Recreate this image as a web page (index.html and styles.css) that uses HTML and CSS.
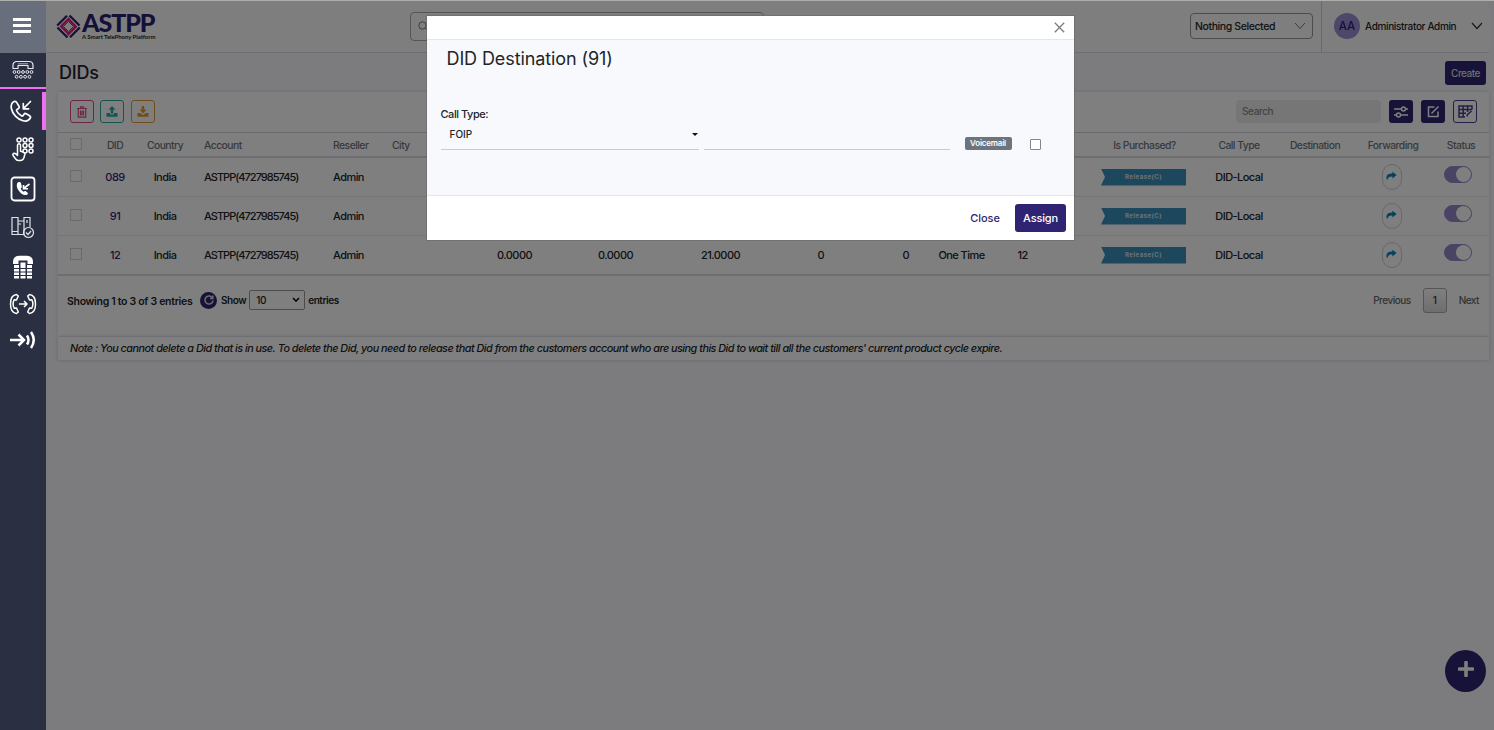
FILE: index.html
```html
<!DOCTYPE html>
<html lang="en">
<head>
<meta charset="utf-8">
<title>ASTPP - DIDs</title>
<link rel="stylesheet" href="styles.css">
</head>
<body>
<svg width="0" height="0" class="defs">
  <symbol id="share" viewBox="0 0 12 10"><path d="M7 .4 11.6 4 7 7.6V5.5C4 5.3 2.2 6 1.6 9.4.6 8.700 .3 7.800.5 6.200.9 3.500 3.500 2.300 7 2.400Z" fill="currentColor"/></symbol>
</svg>
<div class="app">
  <nav class="sidebar">
    <div class="menu"><svg width="20" height="18" viewBox="0 0 20 18"><path d="M1 2.500h18M1 8.500h18M1 14.500h18" stroke="#fff" stroke-width="3"/></svg></div>
    <div class="nav-head"><svg width="22" height="20" viewBox="0 0 22 20" fill="none" stroke="#e5e7ee" stroke-width="1.200"><path d="M1 8.500V5.500Q1 1.500 5 1.500h12Q21 1.500 21 5.500v3h-5V5.500H6v3Z" stroke-linejoin="round"/><path d="M6 3.800h10" stroke-width=".7"/><g stroke-width="1"><circle cx="2.500" cy="12" r="1.400"/><circle cx="6.700" cy="12" r="1.400"/><circle cx="11" cy="12" r="1.400"/><circle cx="15.300" cy="12" r="1.400"/><circle cx="19.500" cy="12" r="1.400"/><circle cx="4.600" cy="16.800" r="1.400"/><circle cx="8.900" cy="16.800" r="1.400"/><circle cx="13.100" cy="16.800" r="1.400"/><circle cx="17.400" cy="16.800" r="1.400"/></g></svg></div>
    <div class="nav-item active"><svg width="22" height="22" viewBox="0 0 22 22" fill="none" stroke="#fff" stroke-width="1.700" stroke-linejoin="round" stroke-linecap="round"><path d="M3.500 1.800C1.200 3.200.8 5.500 1.400 8.500c1 5.500 6 10.700 11.600 12.200 3 .8 5.800 0 7.300-2.700.5-.9.100-1.600-.7-2.200l-3.400-2c-.9-.5-1.700-.3-2.200.5l-.9 1.200c-.4.600-1 .7-1.700.3-2.100-1.100-3.700-2.700-4.700-4.800-.3-.6-.1-1.200.5-1.600L8.500 8.500c.8-.6 1-1.300.5-2.200L6.600 2.400C5.800 1.200 4.800 1 3.500 1.800Z"/><path d="M20.500 1.500 13.500 8.500M13.300 3.500v5.300h5.300"/></svg></div>
    <div class="nav-item"><svg width="22" height="25" viewBox="0 0 22 25" fill="none" stroke="#fff" stroke-width="1.500"><circle cx="7" cy="3" r="2"/><circle cx="13" cy="3" r="2"/><circle cx="19" cy="3" r="2"/><circle cx="13" cy="8.500" r="2"/><circle cx="19" cy="8.500" r="2"/><circle cx="13" cy="14" r="2"/><circle cx="19" cy="14" r="2"/><path d="M5.500 15.500V8.800q0-2 1.500-2t1.500 2v5.500l3 .8q1.700.6 1.300 2.400l-1 3.500q-.8 2.500-3.500 2.500H6.500q-2 0-3.200-2l-2.200-3q-.8-1.800 1-2.200 1.400-.1 3.400 2.200Z" stroke-linejoin="round"/></svg></div>
    <div class="nav-item"><svg width="26" height="26" viewBox="0 0 26 26" fill="none" stroke="#fff" stroke-width="1.800"><rect x="1.500" y="1.500" width="23" height="23" rx="3"/><path d="M8.200 6.200C6.200 7.500 6.500 11 8.300 14c2 3.400 5 5.500 8 5 1.400-.3 2-1.500 1.400-2.300l-2.200-1.600c-.8-.4-1.200.1-1.800.7-1.700-.8-2.600-2-3-3.700.9-.4 1.300-.8 1.100-1.700l-.8-3.200c-.4-1.200-1.600-1.700-2.800-1Z" fill="#fff" stroke="none"/><path d="m19.500 8-6 4.500M13.500 9v3.700h4.500" stroke-width="1.600"/></svg></div>
    <div class="nav-item"><svg width="24" height="23" viewBox="0 0 24 23" fill="none" stroke="#dfe2ea" stroke-width="1.200"><path d="M1 1.500h6v17H1zM7 5h6v13.500H7M13 12V1.500h6V11M13 5V3M1 15.500h6M7 8h3M16 4v3"/><circle cx="17.500" cy="16.500" r="5"/><path d="m15 16.500 2 2 3-3.500"/></svg></div>
    <div class="nav-item"><svg width="22" height="24" viewBox="0 0 22 24" fill="#fff"><path d="M1 7Q1 1 7 .8h8Q21 1 21 7V9h-5.500V5.600h-9V9H1Z"/><path d="M2 10h5v3H2zM8.500 7.500h5V13h-5zM15 10h5v3h-5zM2 14h5v2.600H2zM8.500 14h5v2.600h-5zM15 14h5v2.600h-5zM2 17.600h5v2.400H2zM8.500 17.600h5v2.400h-5zM15 17.600h5v2.400h-5zM2 21h5v2.500H2zM8.500 21h5v2.500h-5zM15 21h5v2.500h-5z"/></svg></div>
    <div class="nav-item late"><svg width="28" height="22" viewBox="0 0 28 22" fill="none" stroke="#fff" stroke-width="1.500" stroke-linejoin="round"><path d="M7.500 1.500C3.500 2 1.500 6 1.500 11s2 9 6 9.500l1.800-1.500-1.800-4-2.200.3C4 13 4 9 5.300 6.700L7.500 7l1.800-4Z"/><path d="M20.500 1.500c4 .5 6 4.500 6 9.500s-2 9-6 9.500L18.700 19l1.800-4 2.200.3c1.300-2.300 1.300-6.300 0-8.600L20.500 7l-1.800-4Z"/><path d="M10 11h7.500M15 8l3 3-3 3"/></svg></div>
    <div class="nav-item"><svg width="26" height="18" viewBox="0 0 26 18" fill="none" stroke="#fff" stroke-width="2.500"><path d="M0 9h13M8.500 3.500 14 9l-5.500 5.500"/><path d="M17 4.500q3 4.500 0 9M21 1q5.500 8 0 16"/></svg></div>
  </nav>

  <main class="main">
    <header class="topbar">
      <div class="brand">
        <svg width="25" height="25" viewBox="0 0 25 25" fill="none" stroke-width="2.300"><path d="M1.200 11.500 11 1.700M13.500 1.500l10 10M23.800 13.500 14 23.300M11.500 23.500l-10-10" stroke="#2b2171"/><path d="M4.500 13 13.500 4M12 4.700l8.500 8.500M20.500 12l-9 9M13 20.300 4.500 11.800" stroke="#e3187b"/><path d="m7.500 12.500 5-5 5 5-5 5Z" stroke="#e3187b" stroke-width="1"/></svg>
        <div class="brand-text"><span class="brand-name">ASTPP</span><span class="brand-sub">A Smart TelePhony Platform</span></div>
      </div>
      <div class="global-search"><svg width="11" height="11" viewBox="0 0 11 11" fill="none" stroke="#777"><circle cx="4.500" cy="4.500" r="3.700"/><path d="m7.500 7.500 3 3"/></svg></div>
      <div class="company"><span>Nothing Selected</span><svg width="12" height="8" viewBox="0 0 12 8" fill="none" stroke="#777"><path d="m1 1 5 5.500L11 1"/></svg></div>
      <div class="user"><span class="avatar">AA</span><span class="user-name">Administrator Admin</span><svg width="12" height="8" viewBox="0 0 12 8" fill="none" stroke="#333" stroke-width="1.200"><path d="m1 1 5 5.500L11 1"/></svg></div>
    </header>

    <div class="page-head"><h1>DIDs</h1><button class="create">Create</button></div>

    <section class="card">
      <div class="toolbar">
        <button class="tool pink"><svg width="10" height="12" viewBox="0 0 10 12" fill="none" stroke="currentColor" stroke-width="1.200"><path d="M0 2.500h10M3.500 2.300V.8h3v1.500M1.300 3v8.200h7.400V3M3.500 4.500v5M5 4.500v5M6.500 4.500v5"/></svg></button>
        <button class="tool teal"><svg width="12" height="11" viewBox="0 0 12 11" fill="currentColor"><path d="M6 0 9.500 3.800H7.200V7.500H4.800V3.800H2.500ZM.5 7H4v1.500h4V7h3.500v3.800H.5Z"/></svg></button>
        <button class="tool orange"><svg width="12" height="11" viewBox="0 0 12 11" fill="currentColor"><path d="M4.800 0h2.400v3.500h2.300L6 7.500 2.500 3.500h2.300ZM.5 7h2.700L6 9l2.800-2h2.700v3.800H.5Z"/></svg></button>
        <div class="search">Search</div>
        <button class="tool solid"><svg width="16" height="14" viewBox="0 0 16 14" fill="none" stroke="#fff" stroke-width="1.500"><path d="M1 4h7.500M12.500 4H15M1 10h2.500M7.500 10H15"/><circle cx="10.500" cy="4" r="2"/><circle cx="5.500" cy="10" r="2"/></svg></button>
        <button class="tool solid"><svg width="13" height="13" viewBox="0 0 13 13" fill="none" stroke="#fff" stroke-width="1.500"><path d="M7.500 2H1.500v9.500H11V6.500M4.500 8.500 11.500 1.500"/></svg></button>
        <button class="tool outline"><svg width="15" height="13" viewBox="0 0 15 13" fill="none" stroke="currentColor" stroke-width="1.500"><path d="M14 4.500V1H1v11h6M1 4.500h13M1 8.200h7M5.200 1v11M9.600 1v6M9 11.500l.4-1.800L13.500 6"/></svg></button>
      </div>
      <div class="row thead">
        <span class="c"><i class="box"></i></span><span class="c">DID</span><span class="c">Country</span><span class="acct">Account</span><span>Reseller</span><span>City</span><span></span><span></span><span></span><span></span><span></span><span></span><span></span><span></span><span class="c">Is Purchased?</span><span class="c">Call Type</span><span class="c">Destination</span><span class="c">Forwarding</span><span class="c">Status</span>
      </div>
      <div class="row">
        <span class="c"><i class="box"></i></span><span class="c link">089</span><span class="c">India</span><span class="acct tight">ASTPP(4727985745)</span><span>Admin</span><span></span><span></span><span></span><span></span><span></span><span></span><span></span><span></span><span></span><span><b class="release">Release(C)</b></span><span class="c">DID-Local</span><span></span><span class="c"><i class="fwd"><svg width="11" height="10"><use href="#share"/></svg></i></span><span class="c"><i class="toggle"></i></span>
      </div>
      <div class="row">
        <span class="c"><i class="box"></i></span><span class="c link">91</span><span class="c">India</span><span class="acct tight">ASTPP(4727985745)</span><span>Admin</span><span></span><span></span><span></span><span></span><span></span><span></span><span></span><span></span><span></span><span><b class="release">Release(C)</b></span><span class="c">DID-Local</span><span></span><span class="c"><i class="fwd"><svg width="11" height="10"><use href="#share"/></svg></i></span><span class="c"><i class="toggle"></i></span>
      </div>
      <div class="row last">
        <span class="c"><i class="box"></i></span><span class="c link">12</span><span class="c">India</span><span class="acct tight">ASTPP(4727985745)</span><span>Admin</span><span></span><span class="r">0.0000</span><span class="r">0.0000</span><span class="r">21.0000</span><span class="r">0</span><span class="r">0</span><span class="c">One Time</span><span class="c">12</span><span></span><span><b class="release">Release(C)</b></span><span class="c">DID-Local</span><span></span><span class="c"><i class="fwd"><svg width="11" height="10"><use href="#share"/></svg></i></span><span class="c"><i class="toggle"></i></span>
      </div>
      <div class="tfoot">
        <strong class="showing">Showing 1 to 3 of 3 entries</strong>
        <i class="refresh"><svg width="10" height="10" viewBox="0 0 10 10" fill="none" stroke="#ddd" stroke-width="1.500"><path d="M9 5.500A4 4 0 1 1 7.800 2.200M8.800.5v3H6"/></svg></i>
        <strong class="show">Show</strong>
        <span class="count">10<svg width="8" height="6" viewBox="0 0 8 6" fill="none" stroke="#111" stroke-width="1.600"><path d="m1 1 3 3 3-3"/></svg></span>
        <strong class="show">entries</strong>
        <div class="pager"><span>Previous</span><b>1</b><span>Next</span></div>
      </div>
    </section>
    <p class="note">Note : You cannot delete a Did that is in use. To delete the Did, you need to release that Did from the customers account who are using this Did to wait till all the customers' current product cycle expire.</p>
    <div class="fab"><svg width="16" height="16" viewBox="0 0 16 16"><path d="M8 1.500v13M1.500 8h13" stroke="#fff" stroke-width="3.600" stroke-linecap="round"/></svg></div>
  </main>

  <div class="overlay"></div>
  <div class="modal">
    <div class="modal-head"><svg width="11" height="11" viewBox="0 0 11 11" stroke="#7c7c7c" stroke-width="1.300"><path d="m.8.8 9.400 9.400M10.200.8.8 10.200"/></svg></div>
    <div class="modal-body">
      <h2>DID Destination (91)</h2>
      <label class="field-label">Call Type:</label>
      <div class="fields">
        <div class="select">FOIP<i class="caret"></i></div>
        <div class="input"></div>
        <span class="badge">Voicemail</span>
        <i class="check"></i>
      </div>
    </div>
    <div class="modal-foot"><button class="close">Close</button><button class="assign">Assign</button></div>
  </div>
  <div class="edge"></div>
</div>
</body>
</html>
```
FILE: styles.css
```css
* { box-sizing: border-box; }
body { margin: 0; font-family: Inter, "Liberation Sans", sans-serif; font-weight: 500; color: #212529; font-size: 11.5px; }
button { font: inherit; border: 0; padding: 0; margin: 0; letter-spacing: inherit; }
svg { display: block; flex: none; }
i { font-style: normal; display: block; }
.defs { position: absolute; }
.app { display: flex; position: relative; width: 1494px; height: 730px; overflow: hidden; background: #f8f9fd; }
.edge { position: absolute; top: 0; left: 0; right: 0; height: 1px; background: #aeaeaa; z-index: 5; }

.sidebar { width: 46px; background: #2a3042; position: relative; z-index: 3; flex: none; display: flex; flex-direction: column; }
.menu { height: 53px; background: #696e7c; display: flex; align-items: center; justify-content: center; padding: 0 2px 2px 0; }
.nav-head { height: 36px; border-bottom: 2px solid #f16df2; display: flex; align-items: center; justify-content: center; padding-right: 1px; }
.nav-item { height: 39px; display: flex; align-items: center; justify-content: center; padding-right: 1px; }
.nav-item.active { margin-top: 3px; height: 38px; border-right: 4px solid #f16df2; padding: 0; }
.nav-item.late { height: 36px; }
.nav-item:last-child { height: 35px; }

.main { flex: 1; display: flex; flex-direction: column; padding-right: 5px; position: relative; }
.topbar { height: 53px; background: #fdfdfd; border-bottom: 1px solid #dcdde0; display: flex; align-items: center; padding-left: 10px; flex: none; }
.brand { display: flex; align-items: center; gap: 1px; width: 354px; }
.brand-text { display: flex; flex-direction: column; }
.brand-name { font: 900 25px/22px Lato, sans-serif; letter-spacing: -1.1px; color: #2b2171; }
.brand-sub { font: 700 6px/8px Lato, sans-serif; white-space: nowrap; letter-spacing: -.05px; }
.global-search { width: 354px; height: 29px; border: 1px solid #aaa; border-radius: 4px; display: flex; align-items: center; padding-left: 7px; }
.company { margin-left: auto; width: 123px; height: 26px; border: 1px solid #999; border-radius: 4px; display: flex; align-items: center; justify-content: space-between; padding: 0 6px 0 4px; font-size: 10.500px; letter-spacing: -.4px; }
.user { margin-left: 8px; border-left: 1px solid #d5d5d5; height: 52px; width: 168px; display: flex; align-items: center; padding-left: 12px; }
.avatar { width: 26px; height: 26px; border-radius: 50%; background: #9e8fd5; color: #2b2171; display: grid; place-items: center; font-size: 11.500px; }
.user-name { margin-left: 5px; font-size: 10px; width: 106px; white-space: nowrap; letter-spacing: -.35px; }

.page-head { height: 39px; display: flex; align-items: center; justify-content: space-between; padding: 0 3px 0 13px; flex: none; }
h1 { margin: 0; font-size: 18px; font-weight: 500; letter-spacing: -.2px; }
.create { background: #2f2471; color: #ddd; width: 41px; height: 24px; border-radius: 3px; font-size: 10px; letter-spacing: -.5px; }

.card { margin-left: 12px; background: #fff; box-shadow: 0 0 4px #d5d7df; height: 244px; flex: none; }
.toolbar { height: 40px; display: flex; align-items: center; padding: 0 12px 1px 12px; }
.tool { width: 24px; height: 23px; border-radius: 3px; display: grid; place-items: center; background: #fff; border: 1px solid currentColor; margin-right: 7px; }
.tool.pink { margin-right: 6px; color: #d94f8c; }
.tool.teal { color: #2ba9a6; }
.tool.orange { color: #df9c35; }
.search { margin-left: auto; width: 145px; height: 23px; border-radius: 4px; background: #ececec; color: #888; font-size: 10px; line-height: 23px; padding-left: 6px; margin-right: 8px; letter-spacing: -.4px; }
.tool.solid { background: #2f2471; border: 0; margin-right: 8px; }
.tool.outline { color: #4a3f8f; margin: 0; }

.row { display: grid; grid-template-columns: 36px 42px 58px 139px 59px 34px 106px 101px 107px 84px 85px 105px 17px 70px 87px 102px 50px 106px 30px; align-items: center; height: 39px; border-bottom: 1px solid #e9e9ec; font-size: 11px; letter-spacing: -.55px; white-space: nowrap; }
.row.last { border-bottom: 2px solid #dcdde0; height: 40px; }
.thead { height: 26px; border-top: 1px solid #d3d5da; border-bottom: 2px solid #dcdde0; color: #6c757d; font-size: 10.300px; letter-spacing: -.5px; }
.c { display: flex; justify-content: center; }
.r { text-align: right; }
.acct { padding-left: 10px; }
.tight { letter-spacing: -.98px; }
.link { color: #2f2471; }
.box { width: 12px; height: 12px; border: 1px solid #d3d4d8; margin-bottom: 2px; }
.release { display: block; width: 85px; height: 17px; background: #3a8fba; color: #d7e4ea; font-size: 6px; line-height: 16px; letter-spacing: .5px; text-align: center; clip-path: polygon(0 0, 100% 0, 100% 100%, 0 100%, 4px 50%); }
.fwd { width: 20px; height: 26px; border: 1px solid #cfd0d4; border-radius: 10px; display: grid; place-items: center; color: #0384bd; margin-right: 3px; padding-bottom: 2px; }
.toggle { width: 28px; height: 17px; border-radius: 9px; border: 1px solid #9687c9; background: radial-gradient(circle at 18.500px 7.500px, #fff 7px, #9687c9 7.600px); margin: 0 6px 5px 0; flex: none; }
.toggle { background: linear-gradient(#fff, #fff) 0 0 / 0 0 no-repeat, #9687c9; display: flex; justify-content: flex-end; }
.toggle::after { content: ""; width: 15px; height: 15px; border-radius: 50%; background: #fff; }

.tfoot { height: 60px; padding: 0 10px 12px 9px; display: flex; align-items: center; font-size: 10.500px; }
.showing { font-size: 10.500px; font-weight: 600; margin-top: 2px; width: 133px; white-space: nowrap; letter-spacing: -.3px; }
.refresh { width: 17px; height: 17px; border-radius: 50%; background: #2f2471; display: grid; place-items: center; margin-right: 4px; }
.show { font-size: 10px; font-weight: 600; letter-spacing: -.45px; }
.count { width: 56px; height: 20px; border: 1px solid #999; border-radius: 2px; display: flex; align-items: center; justify-content: space-between; padding: 0 4px 0 6px; font-size: 10px; margin: 0 3px; letter-spacing: -.4px; }
.pager { margin-left: auto; display: flex; align-items: center; gap: 12px; color: #666; font-size: 10px; letter-spacing: -.5px; }
.pager b { width: 24px; height: 25px; border: 1px solid #aaa; border-radius: 3px; background: linear-gradient(#fff, #dcdcdc); display: grid; place-items: center; color: #333; font-weight: 500; }
.note { margin: 1px 0 0 12px; height: 23px; background: #fff; box-shadow: 0 0 4px #c9cbd3; padding-left: 12px; line-height: 23px; font-style: italic; font-size: 10.800px; letter-spacing: -.495px; white-space: nowrap; flex: none; }
.fab { position: absolute; right: 8px; bottom: 38px; width: 41px; height: 42px; border-radius: 50%; background: #2f2471; display: grid; place-items: center; padding-bottom: 4px; }

.overlay { position: absolute; inset: 0; background: rgba(0, 0, 0, .5); z-index: 2; }
.modal { position: absolute; left: 427px; top: 16px; width: 647px; height: 224px; background: #fff; z-index: 4; display: flex; flex-direction: column; box-shadow: 0 0 0 1px #6668; }
.modal-head { height: 24px; border-bottom: 1px solid #e5e6ea; display: flex; align-items: center; justify-content: flex-end; padding-right: 9px; }
.modal-body { height: 156px; background: #f8f9fd; border-bottom: 1px solid #e5e6ea; padding: 6px 13px 0 13.500px; display: flex; flex-direction: column; }
h2 { margin: 0 0 0 6px; font-size: 18px; line-height: 25px; font-weight: 400; height: 61px; letter-spacing: -.1px; }
.field-label { font-size: 11px; line-height: 15px; letter-spacing: -.45px; }
.fields { display: flex; align-items: flex-end; height: 28px; }
.select { width: 258px; height: 28px; border-bottom: 1px solid #c9cbd1; padding: 4px 0 0 9px; font-size: 10px; display: flex; justify-content: space-between; line-height: 16px; }
.caret { border: 3px solid transparent; border-top-color: #111; border-bottom: 0; margin: 7px 1px 0 0; height: 3px; }
.input { width: 246px; height: 28px; margin-left: 5px; border-bottom: 1px solid #c9cbd1; }
.badge { margin-left: 15px; width: 47px; height: 13px; border-radius: 2px; background: #6c757d; color: #fff; font-size: 8px; line-height: 13px; text-align: center; font-weight: 600; letter-spacing: -.2px; }
.check { width: 11px; height: 11px; border: 1px solid #85858f; border-radius: 1px; background: #fff; margin-left: 18px; }
.modal-foot { flex: 1; display: flex; justify-content: flex-end; align-items: center; padding: 0 8px 1px 0; gap: 15px; font-size: 11px; }
.close { background: none; color: #2f2471; }
.assign { background: #2f2471; color: #fff; width: 51px; height: 28px; border-radius: 3px; letter-spacing: -.15px; }
```
